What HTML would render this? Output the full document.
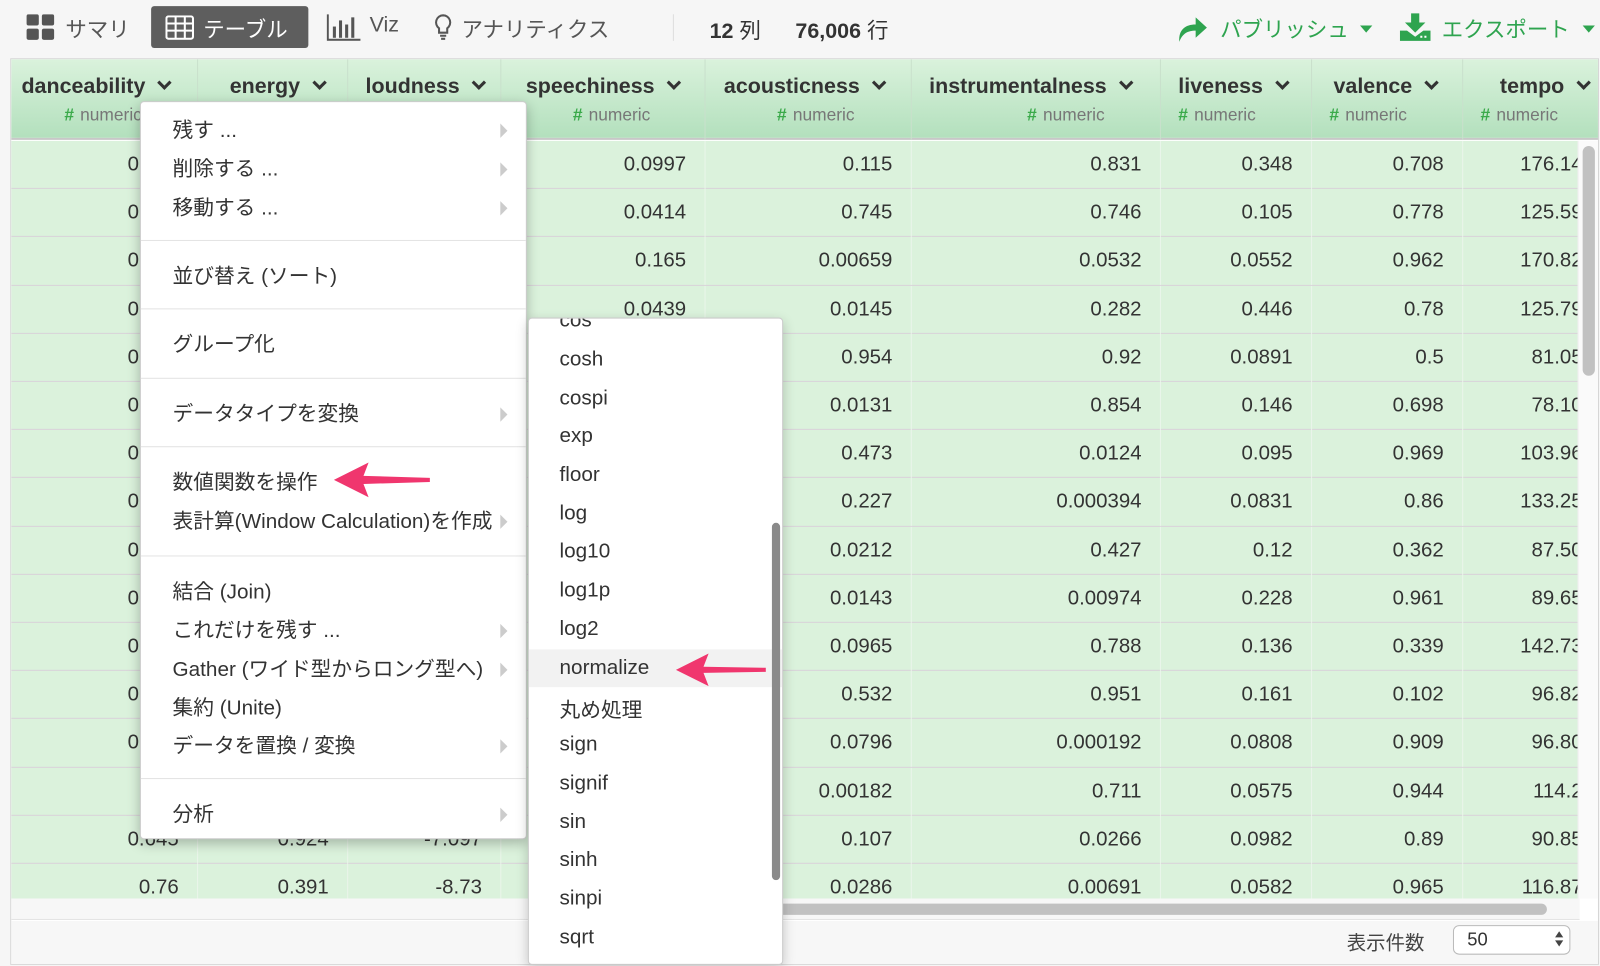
<!DOCTYPE html>
<html><head><meta charset="utf-8">
<style>
*{box-sizing:border-box;margin:0;padding:0}
html,body{width:1600px;height:966px;overflow:hidden;background:#f6f6f6}
#w{position:absolute;left:0;top:0;width:1567px;height:946px;transform:scale(1.02106);transform-origin:0 0;font-family:"Liberation Sans","Noto Sans CJK JP",sans-serif;color:#333}
.a{position:absolute}
.top{font-size:21px;color:#555}
.tbl{left:10px;top:57px;width:1556px;height:888px;border:1px solid #d6d6d6;background:#fff;overflow:hidden}
.hdr{position:absolute;left:0;top:0;height:79px;width:1600px;background:linear-gradient(#daf2dc,#b3e0bd);border-bottom:2px solid #c8c8c8}
.hc{position:absolute;top:0;height:79px;border-right:1px solid #c9e0cc}
.hn{position:absolute;top:15px;font-weight:bold;font-size:21px;color:#333;white-space:nowrap}
.hs{position:absolute;top:45px;font-size:17px;color:#777;white-space:nowrap}
.hs b{color:#3aaa4a;margin-right:6px}
.chev{display:inline-block;width:10px;height:10px;border-right:3px solid #333;border-bottom:3px solid #333;transform:rotate(45deg);margin-left:14px;position:relative;top:-5px}
.body{position:absolute;left:0;top:80px;width:1536px;height:742px;overflow:hidden;background:#dbf2dc}
.r{position:absolute;left:0;height:47.2px;width:1600px;border-bottom:1px solid #d9d2d9}
.c{position:absolute;top:0;height:47px;line-height:46px;text-align:right;font-size:20px;color:#333;padding-right:18px;border-right:1px solid #eaf5ea;overflow:hidden;white-space:nowrap}
.t{left:1422px;width:136px;overflow:visible}
.m1{left:137px;top:99px;width:379px;height:723px;background:#fff;border:1px solid #ccc;border-radius:4px;box-shadow:0 4px 12px rgba(0,0,0,.25)}
.mi{position:absolute;left:31px;font-size:20.3px;color:#333;white-space:nowrap;margin-top:-3px}
.ar{position:absolute;left:352px;width:0;height:0;border-top:7px solid transparent;border-bottom:7px solid transparent;border-left:7px solid #ccc}
.sep{position:absolute;left:0;width:377px;border-top:1px solid #e3e3e3}
.m2{left:517px;top:311px;width:250px;height:634px;background:#fff;border:1px solid #ccc;border-radius:4px;box-shadow:0 4px 12px rgba(0,0,0,.2);overflow:hidden}
.fi{position:absolute;left:30px;font-size:20.3px;color:#333;margin-top:-1px}
</style></head><body><div id="w">

<svg class="a" style="left:26px;top:14px" width="28" height="26" viewBox="0 0 28 26"><rect x="0" y="0" width="12" height="11" rx="2" fill="#555"/><rect x="15" y="0" width="12" height="11" rx="2" fill="#555"/><rect x="0" y="14" width="12" height="11" rx="2" fill="#555"/><rect x="15" y="14" width="12" height="11" rx="2" fill="#555"/></svg>
<div class="a top" style="left:64px;top:13px">サマリ</div>
<div class="a" style="left:148px;top:6px;width:154px;height:41px;background:#5e5e5e;border-radius:3px"></div>
<svg class="a" style="left:162px;top:15px" width="28" height="24" viewBox="0 0 28 24"><rect x="1" y="1" width="26" height="22" rx="2" fill="none" stroke="#fff" stroke-width="2"/><path d="M1 8H27M1 15H27M10 1V23M19 1V23" stroke="#fff" stroke-width="2"/></svg>
<div class="a top" style="left:199px;top:13px;color:#fff">テーブル</div>
<svg class="a" style="left:320px;top:14px" width="34" height="26" viewBox="0 0 34 26"><path d="M1 0V25H33" stroke="#555" stroke-width="2" fill="none"/><rect x="6" y="12" width="3" height="11" fill="#555"/><rect x="12" y="6" width="3" height="17" fill="#555"/><rect x="18" y="10" width="3" height="13" fill="#555"/><rect x="24" y="3" width="3" height="20" fill="#555"/></svg>
<div class="a top" style="left:362px;top:13px">Viz</div>
<svg class="a" style="left:425px;top:13px" width="18" height="28" viewBox="0 0 18 28"><path d="M9 2a7 7 0 0 0-4 12.7V19h8v-4.3A7 7 0 0 0 9 2z" fill="none" stroke="#555" stroke-width="2"/><path d="M6 22h6M7 25h4" stroke="#555" stroke-width="2"/></svg>
<div class="a top" style="left:452px;top:13px">アナリティクス</div>
<div class="a" style="left:659px;top:14px;width:1px;height:26px;background:#ddd"></div>
<div class="a top" style="left:695px;top:14px;color:#333"><b>12</b> 列</div>
<div class="a top" style="left:779px;top:14px;color:#333"><b>76,006</b> 行</div>
<svg class="a" style="left:1152px;top:14px" width="32" height="28" viewBox="0 0 32 28"><path d="M3 27C2 15 9 10 19 10V3l11 10-11 10v-7C11 16 6 19 3 27z" fill="#2ea44f"/></svg>
<div class="a top" style="left:1195px;top:13px;color:#2ea44f">パブリッシュ</div>
<div class="a" style="left:1332px;top:25px;border-left:6px solid transparent;border-right:6px solid transparent;border-top:7px solid #2ea44f"></div>
<svg class="a" style="left:1371px;top:13px" width="30" height="28" viewBox="0 0 30 28"><path d="M11 0h8v9h6L15 19 5 9h6z" fill="#2ea44f"/><path d="M0 17h7l8 6 8-6h7v10H0z" fill="#2ea44f"/><rect x="20" y="22" width="2" height="2" fill="#fff"/><rect x="24" y="22" width="2" height="2" fill="#fff"/></svg>
<div class="a top" style="left:1412px;top:13px;color:#2ea44f">エクスポート</div>
<div class="a" style="left:1550px;top:25px;border-left:6px solid transparent;border-right:6px solid transparent;border-top:7px solid #2ea44f"></div>

<div class="a tbl">
<div class="hdr">
<div class="hc" style="left:0;width:183px"><div class="hn" style="left:10px">danceability<span class="chev"></span></div><div class="hs" style="left:52px"><b>#</b>numeric</div></div>
<div class="hc" style="left:183px;width:147px"><div class="hn" style="left:31px">energy<span class="chev"></span></div></div>
<div class="hc" style="left:330px;width:150px"><div class="hn" style="left:17px">loudness<span class="chev"></span></div></div>
<div class="hc" style="left:480px;width:200px"><div class="hn" style="left:24px">speechiness<span class="chev"></span></div><div class="hs" style="left:70px"><b>#</b>numeric</div></div>
<div class="hc" style="left:680px;width:202px"><div class="hn" style="left:18px">acousticness<span class="chev"></span></div><div class="hs" style="left:70px"><b>#</b>numeric</div></div>
<div class="hc" style="left:882px;width:244px"><div class="hn" style="left:17px">instrumentalness<span class="chev"></span></div><div class="hs" style="left:113px"><b>#</b>numeric</div></div>
<div class="hc" style="left:1126px;width:148px"><div class="hn" style="left:17px">liveness<span class="chev"></span></div><div class="hs" style="left:17px"><b>#</b>numeric</div></div>
<div class="hc" style="left:1274px;width:148px"><div class="hn" style="left:21px">valence<span class="chev"></span></div><div class="hs" style="left:17px"><b>#</b>numeric</div></div>
<div class="hc" style="left:1422px;width:180px"><div class="hn" style="left:36px">tempo<span class="chev"></span></div><div class="hs" style="left:17px"><b>#</b>numeric</div></div>
</div>
<div class="body">
<div class="r" style="top:0"><div class="c" style="left:0;width:183px">0.592</div><div class="c" style="left:183px;width:147px">0.5</div><div class="c" style="left:330px;width:150px">-5.5</div><div class="c" style="left:480px;width:200px">0.0997</div><div class="c" style="left:680px;width:202px">0.115</div><div class="c" style="left:882px;width:244px">0.831</div><div class="c" style="left:1126px;width:148px">0.348</div><div class="c" style="left:1274px;width:148px">0.708</div><div class="c t">176.14</div></div>
<div class="r" style="top:47.2px"><div class="c" style="left:0;width:183px">0.592</div><div class="c" style="left:480px;width:200px">0.0414</div><div class="c" style="left:680px;width:202px">0.745</div><div class="c" style="left:882px;width:244px">0.746</div><div class="c" style="left:1126px;width:148px">0.105</div><div class="c" style="left:1274px;width:148px">0.778</div><div class="c t">125.59</div></div>
<div class="r" style="top:94.4px"><div class="c" style="left:0;width:183px">0.592</div><div class="c" style="left:480px;width:200px">0.165</div><div class="c" style="left:680px;width:202px">0.00659</div><div class="c" style="left:882px;width:244px">0.0532</div><div class="c" style="left:1126px;width:148px">0.0552</div><div class="c" style="left:1274px;width:148px">0.962</div><div class="c t">170.82</div></div>
<div class="r" style="top:141.6px"><div class="c" style="left:0;width:183px">0.592</div><div class="c" style="left:480px;width:200px">0.0439</div><div class="c" style="left:680px;width:202px">0.0145</div><div class="c" style="left:882px;width:244px">0.282</div><div class="c" style="left:1126px;width:148px">0.446</div><div class="c" style="left:1274px;width:148px">0.78</div><div class="c t">125.79</div></div>
<div class="r" style="top:188.8px"><div class="c" style="left:0;width:183px">0.592</div><div class="c" style="left:680px;width:202px">0.954</div><div class="c" style="left:882px;width:244px">0.92</div><div class="c" style="left:1126px;width:148px">0.0891</div><div class="c" style="left:1274px;width:148px">0.5</div><div class="c t">81.05</div></div>
<div class="r" style="top:236px"><div class="c" style="left:0;width:183px">0.592</div><div class="c" style="left:680px;width:202px">0.0131</div><div class="c" style="left:882px;width:244px">0.854</div><div class="c" style="left:1126px;width:148px">0.146</div><div class="c" style="left:1274px;width:148px">0.698</div><div class="c t">78.10</div></div>
<div class="r" style="top:283.2px"><div class="c" style="left:0;width:183px">0.592</div><div class="c" style="left:680px;width:202px">0.473</div><div class="c" style="left:882px;width:244px">0.0124</div><div class="c" style="left:1126px;width:148px">0.095</div><div class="c" style="left:1274px;width:148px">0.969</div><div class="c t">103.96</div></div>
<div class="r" style="top:330.4px"><div class="c" style="left:0;width:183px">0.592</div><div class="c" style="left:680px;width:202px">0.227</div><div class="c" style="left:882px;width:244px">0.000394</div><div class="c" style="left:1126px;width:148px">0.0831</div><div class="c" style="left:1274px;width:148px">0.86</div><div class="c t">133.25</div></div>
<div class="r" style="top:377.6px"><div class="c" style="left:0;width:183px">0.592</div><div class="c" style="left:680px;width:202px">0.0212</div><div class="c" style="left:882px;width:244px">0.427</div><div class="c" style="left:1126px;width:148px">0.12</div><div class="c" style="left:1274px;width:148px">0.362</div><div class="c t">87.50</div></div>
<div class="r" style="top:424.8px"><div class="c" style="left:0;width:183px">0.592</div><div class="c" style="left:680px;width:202px">0.0143</div><div class="c" style="left:882px;width:244px">0.00974</div><div class="c" style="left:1126px;width:148px">0.228</div><div class="c" style="left:1274px;width:148px">0.961</div><div class="c t">89.65</div></div>
<div class="r" style="top:472px"><div class="c" style="left:0;width:183px">0.592</div><div class="c" style="left:680px;width:202px">0.0965</div><div class="c" style="left:882px;width:244px">0.788</div><div class="c" style="left:1126px;width:148px">0.136</div><div class="c" style="left:1274px;width:148px">0.339</div><div class="c t">142.73</div></div>
<div class="r" style="top:519.2px"><div class="c" style="left:0;width:183px">0.592</div><div class="c" style="left:680px;width:202px">0.532</div><div class="c" style="left:882px;width:244px">0.951</div><div class="c" style="left:1126px;width:148px">0.161</div><div class="c" style="left:1274px;width:148px">0.102</div><div class="c t">96.82</div></div>
<div class="r" style="top:566.4px"><div class="c" style="left:0;width:183px">0.592</div><div class="c" style="left:680px;width:202px">0.0796</div><div class="c" style="left:882px;width:244px">0.000192</div><div class="c" style="left:1126px;width:148px">0.0808</div><div class="c" style="left:1274px;width:148px">0.909</div><div class="c t">96.80</div></div>
<div class="r" style="top:613.6px"><div class="c" style="left:680px;width:202px">0.00182</div><div class="c" style="left:882px;width:244px">0.711</div><div class="c" style="left:1126px;width:148px">0.0575</div><div class="c" style="left:1274px;width:148px">0.944</div><div class="c t">114.2</div></div>
<div class="r" style="top:660.8px"><div class="c" style="left:0;width:183px">0.645</div><div class="c" style="left:183px;width:147px">0.924</div><div class="c" style="left:330px;width:150px">-7.097</div><div class="c" style="left:680px;width:202px">0.107</div><div class="c" style="left:882px;width:244px">0.0266</div><div class="c" style="left:1126px;width:148px">0.0982</div><div class="c" style="left:1274px;width:148px">0.89</div><div class="c t">90.85</div></div>
<div class="r" style="top:708px"><div class="c" style="left:0;width:183px">0.76</div><div class="c" style="left:183px;width:147px">0.391</div><div class="c" style="left:330px;width:150px">-8.73</div><div class="c" style="left:480px;width:200px">0.05</div><div class="c" style="left:680px;width:202px">0.0286</div><div class="c" style="left:882px;width:244px">0.00691</div><div class="c" style="left:1126px;width:148px">0.0582</div><div class="c" style="left:1274px;width:148px">0.965</div><div class="c t">116.87</div></div>
</div>
<div class="a" style="left:1534px;top:80px;width:22px;height:742px;background:#fafafa;border-left:1px solid #eee"></div>
<div class="a" style="left:1539px;top:85px;width:12px;height:225px;background:#c1c1c1;border-radius:6px"></div>
<div class="a" style="left:0;top:822px;width:1536px;height:21px;background:#f7f7f7;border-bottom:1px solid #e4e4e4"></div>
<div class="a" style="left:700px;top:827px;width:804px;height:11px;background:#c1c1c1;border-radius:6px"></div>
<div class="a" style="left:0;top:844px;width:1556px;height:44px;background:#f7f7f7"></div>
<div class="a" style="left:1308px;top:851px;font-size:19px;color:#444">表示件数</div>
<div class="a" style="left:1412px;top:848px;width:115px;height:29px;border:1px solid #bbb;border-radius:6px;background:#fff;font-size:18px;line-height:27px;padding-left:13px;color:#333">50</div>
<div class="a" style="left:1512px;top:854px;border-left:4px solid transparent;border-right:4px solid transparent;border-bottom:6px solid #444"></div>
<div class="a" style="left:1512px;top:863px;border-left:4px solid transparent;border-right:4px solid transparent;border-top:6px solid #444"></div>
</div>

<div class="a m1">
<div class="mi" style="top:13px">残す ...</div><div class="ar" style="top:21px"></div>
<div class="mi" style="top:51px">削除する ...</div><div class="ar" style="top:59px"></div>
<div class="mi" style="top:89px">移動する ...</div><div class="ar" style="top:97px"></div>
<div class="sep" style="top:135px"></div>
<div class="mi" style="top:156px">並び替え (ソート)</div>
<div class="sep" style="top:202px"></div>
<div class="mi" style="top:223px">グループ化</div>
<div class="sep" style="top:270px"></div>
<div class="mi" style="top:291px">データタイプを変換</div><div class="ar" style="top:299px"></div>
<div class="sep" style="top:337px"></div>
<div class="mi" style="top:358px">数値関数を操作</div>
<div class="mi" style="top:396px">表計算(Window Calculation)を作成</div><div class="ar" style="top:404px"></div>
<div class="sep" style="top:444px"></div>
<div class="mi" style="top:465px">結合 (Join)</div>
<div class="mi" style="top:503px">これだけを残す ...</div><div class="ar" style="top:511px"></div>
<div class="mi" style="top:541px">Gather (ワイド型からロング型へ)</div><div class="ar" style="top:549px"></div>
<div class="mi" style="top:579px">集約 (Unite)</div>
<div class="mi" style="top:616px">データを置換 / 変換</div><div class="ar" style="top:624px"></div>
<div class="sep" style="top:662px"></div>
<div class="mi" style="top:683px">分析</div><div class="ar" style="top:691px"></div>
</div>
<svg class="a" style="left:325px;top:450px" width="100" height="40" viewBox="0 0 100 40"><path d="M2 20L36 3 31 16 96 18 96 22 31 24 36 37z" fill="#f0366e"/></svg>

<div class="a m2">
<div class="a" style="left:0;top:324px;width:248px;height:37px;background:#f2f2f2"></div>
<div class="fi" style="top:-8px">cos</div>
<div class="fi" style="top:30px">cosh</div>
<div class="fi" style="top:68px">cospi</div>
<div class="fi" style="top:105px">exp</div>
<div class="fi" style="top:143px">floor</div>
<div class="fi" style="top:181px">log</div>
<div class="fi" style="top:218px">log10</div>
<div class="fi" style="top:256px">log1p</div>
<div class="fi" style="top:294px">log2</div>
<div class="fi" style="top:332px">normalize</div>
<div class="fi" style="top:367px">丸め処理</div>
<div class="fi" style="top:407px">sign</div>
<div class="fi" style="top:445px">signif</div>
<div class="fi" style="top:483px">sin</div>
<div class="fi" style="top:520px">sinh</div>
<div class="fi" style="top:558px">sinpi</div>
<div class="fi" style="top:596px">sqrt</div>
<div class="a" style="left:238px;top:200px;width:8px;height:350px;background:#8a8a8a;border-radius:4px"></div>
</div>
<svg class="a" style="left:660px;top:638px" width="92" height="36" viewBox="0 0 92 36"><path d="M2 18L34 2 29 15 90 16 90 20 29 21 34 34z" fill="#f0366e"/></svg>

</div></body></html>
